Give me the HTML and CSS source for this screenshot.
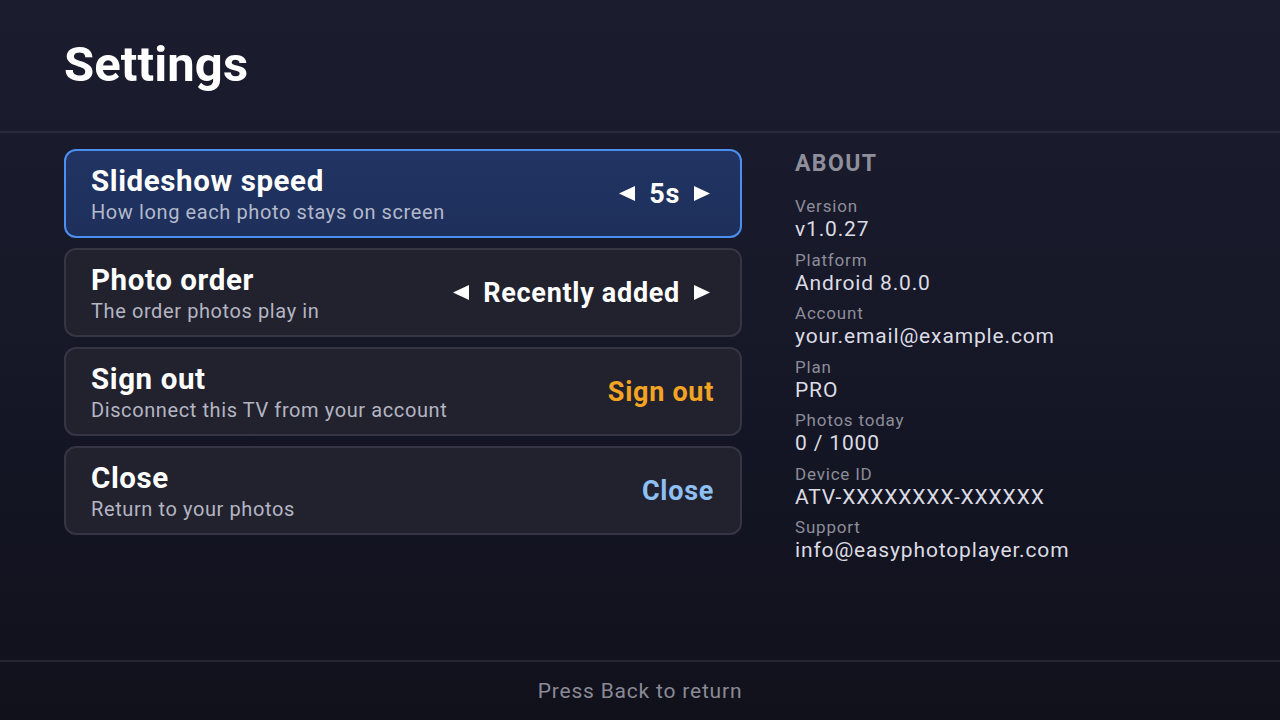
FILE: index.html
```html
<!DOCTYPE html>
<html lang="en">
<head>
<meta charset="utf-8">
<title>Settings</title>
<link rel="stylesheet" href="styles.css">
</head>
<body>
<div class="screen">
  <header class="header">
    <h1 class="title">Settings</h1>
  </header>
  <main class="main">
    <section class="options">
      <div class="card card-focused">
        <div class="card-text">
          <div class="card-title">Slideshow speed</div>
          <div class="card-sub">How long each photo stays on screen</div>
        </div>
        <div class="selector">
          <svg class="arrow" viewBox="0 0 16 15" width="16" height="15"><polygon points="16,0 16,15 0,7.5" fill="currentColor"/></svg>
          <span class="sel-value">5s</span>
          <svg class="arrow" viewBox="0 0 16 15" width="16" height="15"><polygon points="0,0 0,15 16,7.5" fill="currentColor"/></svg>
        </div>
      </div>
      <div class="card">
        <div class="card-text">
          <div class="card-title">Photo order</div>
          <div class="card-sub">The order photos play in</div>
        </div>
        <div class="selector">
          <svg class="arrow" viewBox="0 0 16 15" width="16" height="15"><polygon points="16,0 16,15 0,7.5" fill="currentColor"/></svg>
          <span class="sel-value">Recently added</span>
          <svg class="arrow" viewBox="0 0 16 15" width="16" height="15"><polygon points="0,0 0,15 16,7.5" fill="currentColor"/></svg>
        </div>
      </div>
      <div class="card">
        <div class="card-text">
          <div class="card-title">Sign out</div>
          <div class="card-sub">Disconnect this TV from your account</div>
        </div>
        <div class="action action-warn">Sign out</div>
      </div>
      <div class="card">
        <div class="card-text">
          <div class="card-title">Close</div>
          <div class="card-sub">Return to your photos</div>
        </div>
        <div class="action action-info">Close</div>
      </div>
    </section>
    <aside class="about">
      <h2 class="about-title">ABOUT</h2>
      <dl class="info">
        <div class="info-row"><dt>Version</dt><dd>v1.0.27</dd></div>
        <div class="info-row"><dt>Platform</dt><dd>Android 8.0.0</dd></div>
        <div class="info-row"><dt>Account</dt><dd>your.email@example.com</dd></div>
        <div class="info-row"><dt>Plan</dt><dd>PRO</dd></div>
        <div class="info-row"><dt>Photos today</dt><dd>0 / 1000</dd></div>
        <div class="info-row"><dt>Device ID</dt><dd>ATV-XXXXXXXX-XXXXXX</dd></div>
        <div class="info-row"><dt>Support</dt><dd>info@easyphotoplayer.com</dd></div>
      </dl>
    </aside>
  </main>
  <footer class="footer">Press Back to return</footer>
</div>
</body>
</html>
```

FILE: styles.css
```css
* { box-sizing: border-box; }

html, body {
  margin: 0;
  padding: 0;
  width: 1280px;
  height: 720px;
  overflow: hidden;
}

body {
  font-family: Roboto, "Noto Sans", "Liberation Sans", sans-serif;
  color: #ffffff;
  background: linear-gradient(180deg, #1b1c2e 0%, #161727 50%, #10111b 100%);
}

.screen {
  height: 720px;
  display: flex;
  flex-direction: column;
}

.header {
  height: 133px;
  padding: 0 64px;
  border-bottom: 2px solid #2a2b3a;
  display: flex;
  align-items: flex-start;
}

.title {
  margin: 0;
  padding-top: 36px;
  font-size: 49px;
  line-height: 58px;
  font-weight: 700;
  letter-spacing: 0.1px;
  color: #ffffff;
}

.main {
  flex: 1;
  display: grid;
  grid-template-columns: 678px 1fr;
  column-gap: 53px;
  padding: 16px 64px 0 64px;
}

.options {
  display: flex;
  flex-direction: column;
  gap: 10px;
}

.card {
  height: 89px;
  display: flex;
  align-items: center;
  justify-content: space-between;
  padding: 0 26px 0 25px;
  border: 2px solid #353543;
  border-radius: 12px;
  background: #22222f;
}

.card-focused {
  border-color: #4b8ff0;
  background: linear-gradient(180deg, #213463 0%, #1e2f5a 100%);
}

.card-text {
  display: flex;
  flex-direction: column;
  gap: 3px;
  padding-top: 1px;
}

.card-title {
  font-size: 29.5px;
  line-height: 32px;
  font-weight: 700;
  letter-spacing: 0.6px;
  color: #ffffff;
}

.card-sub {
  font-size: 20px;
  line-height: 24px;
  color: #b4b5c2;
  letter-spacing: 0.6px;
}

.card-focused .card-sub {
  color: #b3b9cc;
}

.selector {
  display: flex;
  align-items: center;
  gap: 14px;
  padding-right: 4px;
  color: #ffffff;
  font-size: 27px;
  line-height: 32px;
  font-weight: 700;
}

.arrow {
  display: block;
}

.sel-value {
  letter-spacing: 0.7px;
}

.action {
  font-size: 27px;
  line-height: 32px;
  font-weight: 700;
  letter-spacing: 0.7px;
}

.action-warn { color: #f4a423; }
.action-info { color: #8fc0f3; }

.about-title {
  margin: 0 0 16px 0;
  font-size: 23px;
  line-height: 30px;
  font-weight: 700;
  letter-spacing: 1.4px;
  color: #8f8f9c;
}

.info {
  margin: 0;
  display: flex;
  flex-direction: column;
  gap: 7.5px;
}

.info-row {
  display: flex;
  flex-direction: column;
}

.info dt {
  font-size: 17px;
  line-height: 22px;
  color: #8d8d99;
  letter-spacing: 0.8px;
}

.info dd {
  margin: 0;
  font-size: 21px;
  line-height: 24px;
  color: #dcdce4;
  letter-spacing: 0.85px;
}

.footer {
  height: 60px;
  border-top: 2px solid #25262f;
  display: flex;
  align-items: center;
  justify-content: center;
  font-size: 21px;
  letter-spacing: 0.8px;
  color: #8a8a96;
}
```
